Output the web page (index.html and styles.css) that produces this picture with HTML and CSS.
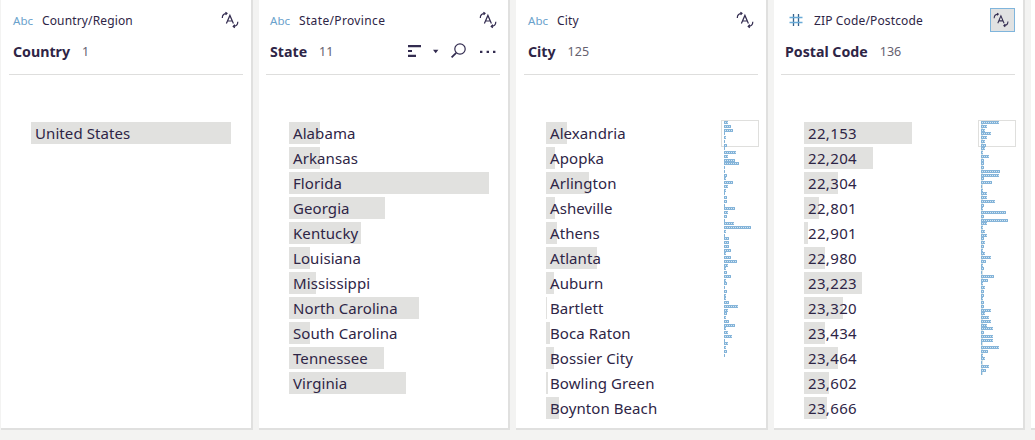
FILE: index.html
```html
<!DOCTYPE html>
<html lang="en">
<head>
<meta charset="utf-8">
<title>Profile pane</title>
<link rel="stylesheet" href="styles.css">
</head>
<body>
<svg width="0" height="0" class="defs">
  <symbol id="role" viewBox="0 0 18 18">
    <path class="line" d="M5.4 12.6 8.9 4.4 12.4 12.6M6.6 10h4.6"/>
    <path class="line" d="M1.3 7C1.3 4.3 3 2.6 5.6 2.4M4.4 1.2 6 2.4 4.6 3.8M16.8 10.8C16.8 13.8 15 15.3 12.4 15.4M13.8 13.6 12.2 15.4 13.8 16.8"/>
  </symbol>
</svg>
<main class="pane">
  <section class="card">
    <header class="head">
      <div class="kind"><span class="abc">Abc</span><span class="label">Country/Region</span><svg class="role"><use href="#role"/></svg></div>
      <div class="field"><h2>Country</h2><span class="count">1</span></div>
    </header>
    <div class="body"><ul class="values" data-values="country"></ul></div>
  </section>
  <section class="card">
    <header class="head">
      <div class="kind"><span class="abc">Abc</span><span class="label wide">State/Province</span><svg class="role"><use href="#role"/></svg></div>
      <div class="field"><h2>State</h2><span class="count">11</span>
        <svg class="tools" width="90" height="20" viewBox="0 0 90 20">
          <path class="solid" d="M1 4h13v2.2H1zM1 9h4v2H1zM1 13.8h8V16H1zM26 8.8h5.4L28.7 12.2z"/>
          <circle class="line" cx="53" cy="8" r="5.2"/><path class="line thick" d="M49.2 11.8 44.6 16.4"/>
          <path class="solid" d="M73 9.8h2.4v2.2H73zM79.6 9.8H82v2.2h-2.4zM86 9.8h2.4v2.2H86z"/>
        </svg>
      </div>
    </header>
    <div class="body"><ul class="values" data-values="state"></ul></div>
  </section>
  <section class="card">
    <header class="head">
      <div class="kind"><span class="abc">Abc</span><span class="label">City</span><svg class="role"><use href="#role"/></svg></div>
      <div class="field"><h2>City</h2><span class="count">125</span></div>
    </header>
    <div class="body city"><ul class="values" data-values="city"></ul><div class="map" data-map="city"></div></div>
  </section>
  <section class="card">
    <header class="head">
      <div class="kind"><svg class="hash" width="14" height="14" viewBox="0 0 14 14"><path class="dark" d="M4.5 1v12M9.5 1v12"/><path class="blue" d="M.5 4.5h13M.5 9.5h13"/></svg><span class="label">ZIP Code/Postcode</span><span class="selected"><svg class="role"><use href="#role"/></svg></span></div>
      <div class="field"><h2>Postal Code</h2><span class="count">136</span></div>
    </header>
    <div class="body zip"><ul class="values" data-values="zip"></ul><div class="map axis" data-map="zip"></div></div>
  </section>
  <section class="card next"></section>
</main>
<script src="profile.js"></script>
</body>
</html>
```
FILE: styles.css
```css
* { box-sizing: border-box; }
html { overflow: hidden; }
body {
  margin: 0;
  height: 440px;
  overflow: hidden;
  background: #f3f3f2;
  color: #2e2546;
  font-family: "Noto Sans", "Open Sans", sans-serif;
}
.defs { display: block; }
.pane { display: flex; width: 1035px; height: 428px; padding-left: 1px; }
.card {
  flex: none;
  width: 250px;
  margin-right: 8px;
  background: #fff;
  box-shadow: 1px 1px 0 1px #e0e0df;
  clip-path: inset(0 -2px -2px 0);
}
.card:nth-child(even) { width: 249px; }
.card.next { flex: 1; width: auto; margin-right: 0; }
.head { height: 75px; margin: 0 8px; padding: 8px 0 0 4px; border-bottom: 1px solid #dededd; }
.card:nth-child(even) .head { margin-left: 7px; }
.kind { display: flex; align-items: center; height: 24px; }
.abc { width: 29px; color: #6aa2cc; font-size: 11.5px; letter-spacing: .1px; }
.label { font-size: 12px; letter-spacing: .14px; }
.wide { letter-spacing: .35px; }
.role { width: 18px; height: 18px; margin: 0 4px 0 auto; }
.card:nth-child(even) .role { margin-right: 3px; }
.hash { margin: 0 11px 0 4px; }
.selected {
  display: flex;
  width: 25px;
  height: 24px;
  margin-left: auto;
  padding: 2px;
  background: #e1e2e2;
  border: 1px solid #7fb5dc;
}
.field { display: flex; align-items: center; height: 24px; margin-top: 7px; }
h2 { margin: 0; font-size: 14.2px; font-weight: 700; }
.count { margin-left: 12px; font-size: 12.5px; color: #66616f; }
.tools { margin: 0 3px 0 auto; }
.line { fill: none; stroke: #332c50; stroke-width: 1.2; }
.thick { stroke-width: 1.8; }
.solid { fill: #332c50; }
.dark { stroke: #35618a; stroke-width: 1.3; }
.blue { stroke: #6aabd8; stroke-width: 1.5; }
.body { display: flex; justify-content: space-between; padding: 45px 8px 0 30px; }
.body.city, .body.zip { padding-right: 7px; }
.values { display: grid; gap: 3px; width: 200px; margin: 2px 0 0; padding: 0; list-style: none; }
.values:not(:last-child) { width: 170px; }
.value { display: flex; height: 22px; font-size: 15px; line-height: 22px; letter-spacing: .08px; white-space: nowrap; }
.zip .value { letter-spacing: .35px; }
.bar { flex: none; width: var(--w); margin-right: calc(4px - var(--w)); background: #e1e1df; }
.text { z-index: 1; }
.map { position: relative; align-self: flex-start; display: flex; flex-direction: column; gap: .75px; width: 38px; padding: 1px 0 0 3px; }
.map::before {
  content: "";
  position: absolute;
  inset: 0 0 auto;
  height: 25px;
  border: 1px solid #dfdfdd;
}
.axis::after {
  content: "";
  position: absolute;
  left: 3px;
  top: 2px;
  bottom: 0;
  width: 2px;
  background: #d8e4e6;
}
.tick {
  flex: none;
  z-index: 1;
  width: var(--w);
  height: 3px;
  background: repeating-linear-gradient(90deg, #7fb0d6 0 1px, #d6e8f3 1px 2px) 0 1px / 100% 1px no-repeat, #86b5da;
}
```
FILE: profile.js
```js
const values = {
  country: [["United States", 200]],
  state: [["Alabama", 31], ["Arkansas", 31], ["Florida", 200], ["Georgia", 96], ["Kentucky", 72], ["Louisiana", 21], ["Mississippi", 27], ["North Carolina", 130], ["South Carolina", 21], ["Tennessee", 95], ["Virginia", 117]],
  city: [["Alexandria", 21], ["Apopka", 9], ["Arlington", 43], ["Asheville", 9], ["Athens", 11], ["Atlanta", 51], ["Auburn", 8], ["Bartlett", 1], ["Boca Raton", 4], ["Bossier City", 8], ["Bowling Green", 2], ["Boynton Beach", 13]],
  zip: [["22,153", 108], ["22,204", 69], ["22,304", 34], ["22,801", 15], ["22,901", 4], ["22,980", 21], ["23,223", 58], ["23,320", 39], ["23,434", 21], ["23,464", 34], ["23,602", 25], ["23,666", 23]]
};
const maps = {
  city: [4,7,9,1,2,1,3,1,12,4,11,15,1,1,3,2,9,4,2,1,3,3,1,11,4,3,1,10,27,2,1,5,5,5,7,2,7,13,4,2,3,7,2,3,1,3,2,2,5,14,4,3,2,5,11,2,4,8,1,4,2,3,1],
  zip: [18,6,4,10,6,4,5,4,2,8,3,3,3,19,18,3,11,1,2,6,6,14,3,2,25,3,27,6,2,4,6,3,4,3,2,4,10,5,2,3,1,13,7,2,4,3,3,2,3,3,10,4,8,10,6,12,3,12,12,1,18,7,2,4,1,8,5,1]
};
document.querySelectorAll("[data-values]").forEach(list => {
  list.innerHTML = values[list.dataset.values].map(([name, width]) =>
    `<li class="value"><span class="bar" style="--w:${width}px"></span><span class="text">${name}</span></li>`).join("");
});
document.querySelectorAll("[data-map]").forEach(map => {
  map.innerHTML = maps[map.dataset.map].map(width => `<span class="tick" style="--w:${width}px"></span>`).join("");
});
```
